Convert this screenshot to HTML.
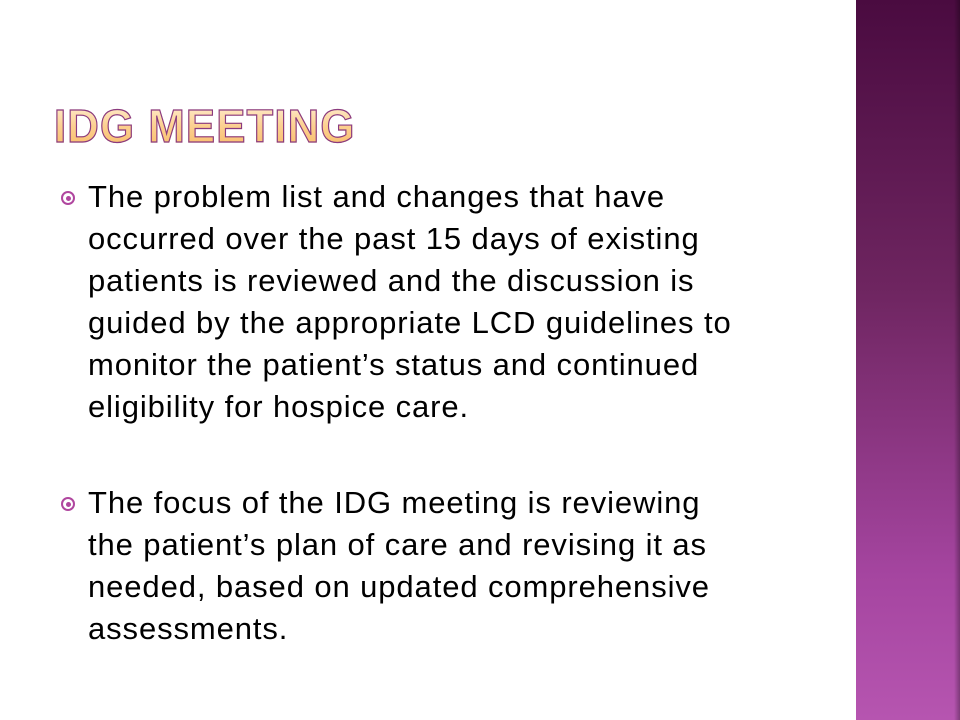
<!DOCTYPE html>
<html><head><style>
body{margin:0;width:960px;height:720px;background:#fff;position:relative;overflow:hidden;font-family:"Liberation Sans",sans-serif}
.side{position:absolute;left:856px;top:0;width:104px;height:720px;background:linear-gradient(#4a0b40,#6e2560 40%,#a545a0 80%,#b655b0)}
.side:after{content:"";position:absolute;right:0;top:0;width:6px;height:100%;background:linear-gradient(90deg,rgba(0,0,0,0),rgba(0,0,0,.3))}
h1{position:absolute;left:54px;top:98px;margin:0;font-size:46px;font-weight:bold;letter-spacing:1.2px;-webkit-text-stroke:1.2px #8a3a80;background:linear-gradient(#fff4e0,#fcd090 50%,#f8b860);-webkit-background-clip:text;background-clip:text;-webkit-text-fill-color:transparent;line-height:56px;transform:scaleX(.95);transform-origin:left}
.p{position:absolute;left:88px;font-size:31px;letter-spacing:.9px;line-height:42px;color:#000;width:760px}
.b{position:absolute;left:-27px;top:15px;width:10px;height:10px;border:2px solid #b0469f;border-radius:50%}
.b:after{content:"";position:absolute;left:2.5px;top:2.5px;width:5px;height:5px;border-radius:50%;background:#b0469f}
</style></head><body>
<div class="side"></div>
<h1>IDG MEETING</h1>
<div class="p" style="top:176px"><span class="b"></span>The problem list and changes that have<br>occurred over the past 15 days of existing<br>patients is reviewed and the discussion is<br>guided by the appropriate LCD guidelines to<br>monitor the patient’s status and continued<br>eligibility for hospice care.</div>
<div class="p" style="top:482px"><span class="b"></span>The focus of the IDG meeting is reviewing<br>the patient’s plan of care and revising it as<br>needed, based on updated comprehensive<br>assessments.</div>
</body></html>
